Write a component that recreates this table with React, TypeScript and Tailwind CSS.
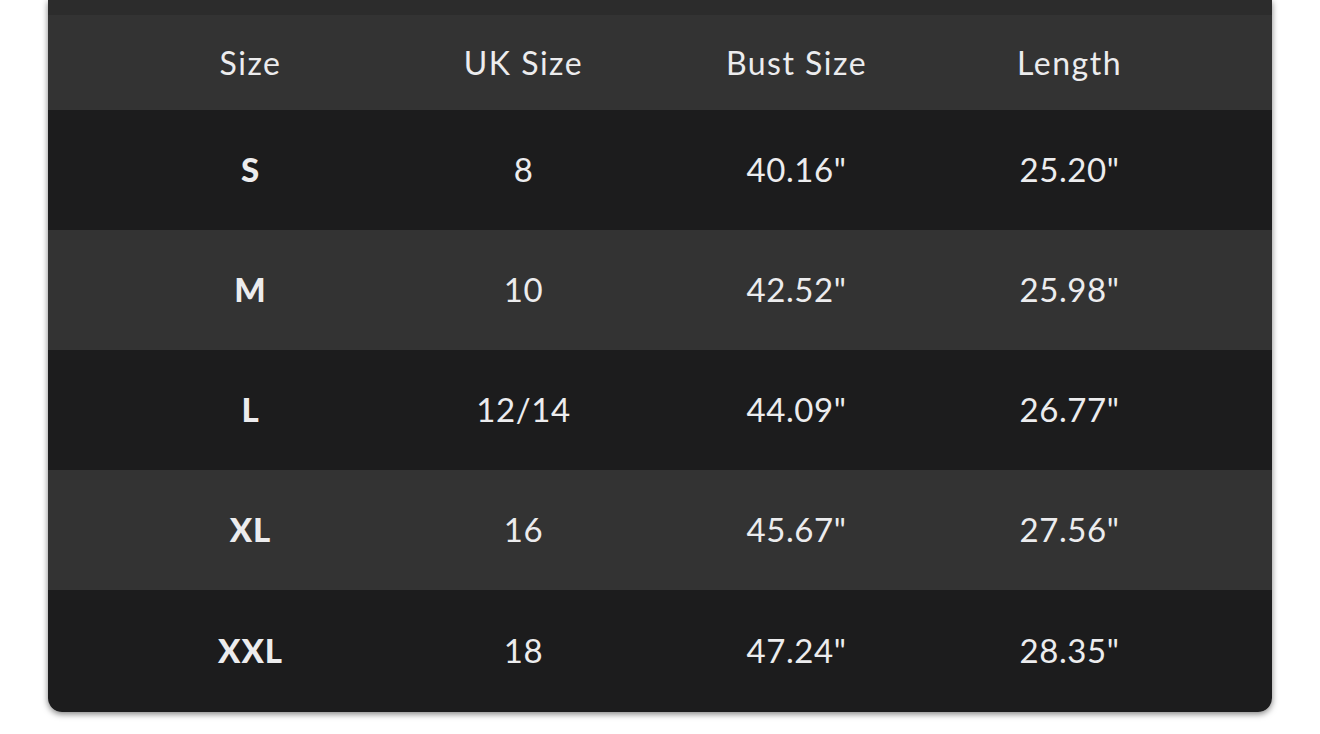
const rows = [
  { size: "S", uk: "8", bust: '40.16"', length: '25.20"' },
  { size: "M", uk: "10", bust: '42.52"', length: '25.98"' },
  { size: "L", uk: "12/14", bust: '44.09"', length: '26.77"' },
  { size: "XL", uk: "16", bust: '45.67"', length: '27.56"' },
  { size: "XXL", uk: "18", bust: '47.24"', length: '28.35"' },
];

export default function App() {
  return (
    <div className="w-[1320px] h-[734px] bg-white overflow-hidden font-['Lato','Liberation_Sans',sans-serif] text-[#ececee]">
      <div className="ml-[48px] w-[1224px] rounded-b-[14px] shadow-[0_2px_6px_rgba(0,0,0,0.5)]">
        {/* dark band along the top edge */}
        <div className="h-[15px] bg-[#2c2c2c]"></div>
        <div className="rounded-b-[14px] overflow-hidden">
          <div className="grid grid-cols-4 px-[66px] h-[95px] items-center bg-[#333333] text-[32px] tracking-[1.5px]">
            <div className="text-center">Size</div>
            <div className="text-center">UK Size</div>
            <div className="text-center">Bust Size</div>
            <div className="text-center">Length</div>
          </div>
          {rows.map((r, i) => (
            <div
              key={r.size}
              className={`grid grid-cols-4 px-[66px] items-center text-[33px] tracking-[0.6px] ${
                i === rows.length - 1 ? "h-[122px]" : "h-[120px]"
              } ${i % 2 === 0 ? "bg-[#1c1c1d]" : "bg-[#333333]"}`}
            >
              <div className="text-center font-black tracking-[1px]">{r.size}</div>
              <div className="text-center">{r.uk}</div>
              <div className="text-center">{r.bust}</div>
              <div className="text-center">{r.length}</div>
            </div>
          ))}
        </div>
      </div>
    </div>
  );
}
